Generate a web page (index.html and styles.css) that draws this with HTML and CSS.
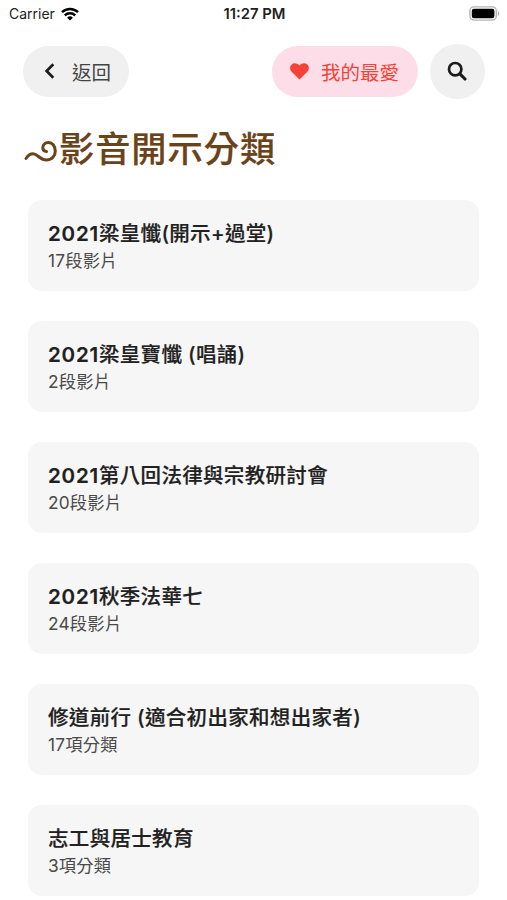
FILE: index.html
```
<!DOCTYPE html>
<html lang="zh-Hant">

<head>
  <meta charset="UTF-8">
  <meta name="viewport" content="width=device-width, initial-scale=1.0">
  <title>影音開示分類</title>
  <link rel="stylesheet" href="styles.css">
</head>

<body>
  <div class="status-bar">
    <div class="carrier">
      <span>Carrier</span>
      <svg width="18" height="14" viewBox="0 0 18 14" fill="none" stroke="#000" stroke-width="2.5">
        <path d="M1 5.1a11.6 11.6 0 0 1 16 0"/>
        <path d="M3.8 8.4a7.6 7.6 0 0 1 10.4 0"/>
        <path d="M9 13.6L6.1 10.7a4.2 4.2 0 0 1 5.8 0z" fill="#000" stroke="none"/>
      </svg>
    </div>
    <span class="time">11:27 PM</span>
    <svg class="battery" width="31" height="15" viewBox="0 0 31 15">
      <rect x="0.9" y="0.9" width="26.4" height="13.2" rx="4" fill="#fff" stroke="#b4b4b4" stroke-width="1.4"/>
      <rect x="2.8" y="2.8" width="22.6" height="9.4" rx="2.2" fill="#000"/>
      <path d="M28.8 5.2c2 .8 2 3.8 0 4.6z" fill="#aaa"/>
    </svg>
  </div>

  <header>
    <button class="pill back">
      <svg width="11" height="16" viewBox="0 0 11 16" fill="none" stroke="#1c1c1c" stroke-width="2.7">
        <path d="M9.3 1.2L2.6 8l6.7 6.8"/>
      </svg>
      <span>返回</span>
    </button>
    <button class="pill favorite">
      <svg width="19" height="17" viewBox="0 0 19 17" fill="#f44336">
        <path d="M9.5 16.6L1.7 8.8C-.5 6.5-.3 3.1 1.7 1.4 4-.5 7.3 0 9.5 2.6 11.7 0 15-.5 17.3 1.4c2 1.7 2.2 5.1 0 7.4z"/>
      </svg>
      <span>我的最愛</span>
    </button>
    <button class="search" aria-label="搜尋">
      <svg width="20" height="20" viewBox="0 0 20 20" fill="none" stroke="#1c1c1c">
        <circle cx="8.2" cy="8.2" r="6.2" stroke-width="2.7"/>
        <path d="M12.9 12.9l5.100 5.100" stroke-width="3.1" stroke-linecap="round"/>
      </svg>
    </button>
  </header>

  <h1>
    <svg width="34" height="24" viewBox="0 0 34 24" fill="none" stroke="#6b431b" stroke-width="3" stroke-linecap="round">
      <path d="M2 19.5C4 16.5 6 14.8 9 14.8c4.500 0 7 6.200 13.500 6.200 5.500 0 8.800-4.200 8.800-8.800 0-5-2.800-8.700-6.800-8.700-3.400 0-5.700 2.400-5.700 5.100 0 2.300 1.500 3.900 3.700 3.900"/>
    </svg>
    <span>影音開示分類</span>
  </h1>

  <main>
    <div class="card">
      <h2><span class="year">2021</span>梁皇懺(開示+過堂)</h2>
      <p>17段影片</p>
    </div>
    <div class="card">
      <h2><span class="year">2021</span>梁皇寶懺 (唱誦)</h2>
      <p>2段影片</p>
    </div>
    <div class="card">
      <h2><span class="year">2021</span>第八回法律與宗教研討會</h2>
      <p>20段影片</p>
    </div>
    <div class="card">
      <h2><span class="year">2021</span>秋季法華七</h2>
      <p>24段影片</p>
    </div>
    <div class="card">
      <h2>修道前行 (適合初出家和想出家者)</h2>
      <p>17項分類</p>
    </div>
    <div class="card">
      <h2>志工與居士教育</h2>
      <p>3項分類</p>
    </div>
  </main>
</body>

</html>
```
FILE: styles.css
```
* {
  box-sizing: border-box;
}

body {
  margin: 0;
  height: 900px;
  overflow: hidden;
  background: #fff;
  color: #212121;
  font-family: Inter, "Noto Sans CJK TC", sans-serif;
}

.status-bar {
  display: grid;
  grid-template-columns: 1fr auto 1fr;
  align-items: center;
  height: 27px;
  padding: 0 7px 0 9px;
  font-size: 14px;
}

.carrier {
  display: flex;
  align-items: center;
  gap: 6px;
}

.time {
  font-size: 14.8px;
  font-weight: 600;
}

.battery {
  justify-self: end;
}

header {
  display: flex;
  align-items: center;
  height: 56px;
  margin-top: 16px;
  padding: 0 22px 0 23px;
}

button {
  display: flex;
  align-items: center;
  border: none;
  padding: 0;
  background: #f0f0f0;
  color: #444;
  font-family: inherit;
  font-size: 19.5px;
}

.pill {
  height: 51px;
  border-radius: 26px;
}

.back {
  width: 106px;
  padding-left: 21px;
  gap: 17px;
}

.favorite {
  width: 146px;
  margin-left: auto;
  padding-left: 18px;
  gap: 12px;
  background: #fddde8;
  color: #f44336;
}

.search {
  width: 55px;
  height: 55px;
  margin-left: 12px;
  padding-right: 2px;
  justify-content: center;
  border-radius: 50%;
}

h1 {
  display: flex;
  align-items: center;
  height: 52px;
  margin: 24px 0 0 24px;
  color: #6b431b;
  font-size: 35.2px;
  font-weight: 500;
  letter-spacing: 1px;
  line-height: 52px;
  -webkit-text-stroke: 0.2px #6b431b;
}

h1 svg {
  margin-top: 4px;
}

h1 span {
  margin-left: 1px;
}

main {
  display: flex;
  flex-direction: column;
  gap: 30px;
  margin: 25px 28px 0;
}

.card {
  flex: none;
  height: 91px;
  padding: 19px 20px;
  border-radius: 14px;
  background: #f6f6f6;
}

.card h2 {
  margin: 0;
  font-size: 20.5px;
  font-weight: 500;
  letter-spacing: 0.32px;
  line-height: 29px;
  -webkit-text-stroke: 0.2px #212121;
}

.card .year {
  font-weight: 600;
  letter-spacing: 0.8px;
}

.card p {
  margin: 0;
  color: #4a4a4a;
  font-size: 17.3px;
  letter-spacing: 0.2px;
  line-height: 25px;
}
```
